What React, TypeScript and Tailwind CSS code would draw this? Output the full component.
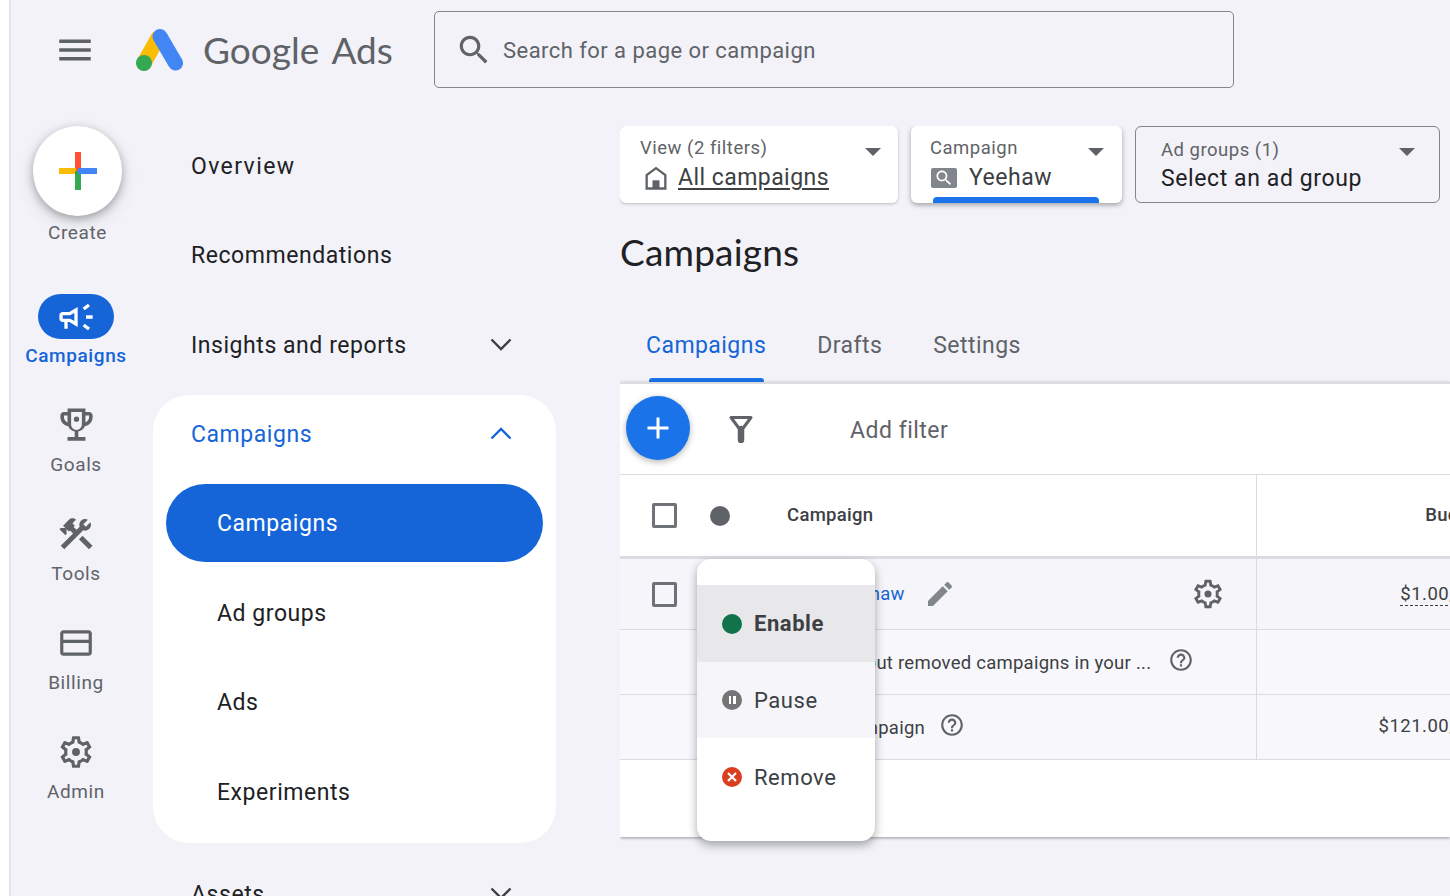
const gear =
	"M19.43 12.98c.04-.32.07-.64.07-.98 0-.34-.03-.66-.07-.98l2.11-1.65c.19-.15.24-.42.12-.64l-2-3.46c-.09-.16-.26-.25-.44-.25-.06 0-.12.01-.17.03l-2.49 1c-.52-.4-1.08-.73-1.69-.98l-.38-2.65C14.46 2.18 14.25 2 14 2h-4c-.25 0-.46.18-.49.42l-.38 2.65c-.61.25-1.17.59-1.69.98l-2.49-1c-.06-.02-.12-.03-.18-.03-.17 0-.34.09-.43.25l-2 3.46c-.13.22-.07.49.12.64l2.11 1.65c-.04.32-.07.65-.07.98 0 .33.03.66.07.98l-2.11 1.65c-.19.15-.24.42-.12.64l2 3.46c.09.16.26.25.44.25.06 0 .12-.01.17-.03l2.49-1c.52.4 1.08.73 1.69.98l.38 2.65c.03.24.24.42.49.42h4c.25 0 .46-.18.49-.42l.38-2.65c.61-.25 1.17-.59 1.69-.98l2.49 1c.06.02.12.03.18.03.17 0 .34-.09.43-.25l2-3.46c.12-.22.07-.49-.12-.64l-2.11-1.65zm-1.98-1.71c.04.31.05.52.05.73 0 .21-.02.43-.05.73l-.14 1.13.89.7 1.08.84-.7 1.21-1.27-.51-1.04-.42-.9.68c-.43.32-.84.56-1.25.73l-1.06.43-.16 1.13-.2 1.35h-1.4l-.19-1.35-.16-1.13-1.06-.43c-.43-.18-.83-.41-1.23-.71l-.91-.7-1.06.43-1.27.51-.7-1.21 1.08-.84.89-.7-.14-1.13c-.03-.31-.05-.54-.05-.74s.02-.43.05-.73l.14-1.13-.89-.7-1.08-.84.7-1.21 1.27.51 1.04.42.9-.68c.43-.32.84-.56 1.25-.73l1.06-.43.16-1.13.2-1.35h1.39l.19 1.35.16 1.13 1.06.43c.43.18.83.41 1.23.71l.91.7 1.06-.43 1.27-.51.7 1.21-1.07.85-.89.7.14 1.13zM12 9.5a2.5 2.5 0 1 0 0 5 2.5 2.5 0 0 0 0-5z";

const help =
	"M11 18h2v-2h-2v2zm1-16C6.480 2 2 6.480 2 12s4.480 10 10 10 10-4.480 10-10S17.520 2 12 2zm0 18c-4.410 0-8-3.590-8-8s3.590-8 8-8 8 3.590 8 8-3.590 8-8 8zm0-14c-2.210 0-4 1.790-4 4h2c0-1.100.9-2 2-2s2 .9 2 2c0 2-3 1.750-3 5h2c0-2.250 3-2.500 3-5 0-2.210-1.790-4-4-4z";

const search =
	"M15.500 14h-.79l-.28-.27C15.410 12.590 16 11.110 16 9.500 16 5.910 13.090 3 9.500 3S3 5.910 3 9.500 5.910 16 9.500 16c1.610 0 3.090-.59 4.230-1.570l.27.28v.79l5 4.990L20.490 19l-4.990-5zm-6 0C7.010 14 5 11.990 5 9.500S7.010 5 9.500 5 14 7.010 14 9.500 11.990 14 9.500 14z";

function Icon({ d, className }: { d: string; className?: string }) {
	return (
		<svg viewBox="0 0 24 24" fill="currentColor" className={className}>
			<path d={d} />
		</svg>
	);
}

function Chevron({ up, className }: { up?: boolean; className?: string }) {
	return (
		<svg viewBox="0 0 22 13" fill="none" stroke="currentColor" strokeWidth="2.4" className={className}>
			<path d={up ? "M1.5 11.5 11 2l9.500 9.500" : "M1.5 1.500 11 11l9.500-9.500"} />
		</svg>
	);
}

function Caret() {
	return <div className="h-0 w-0 border-x-[8px] border-t-[8px] border-x-transparent border-t-[#5f6368]" />;
}

const railItems = [
	{
		label: "Goals",
		size: "w-[43px] h-[43px] -mt-[2px]",
		d: "M19 5h-2V3H7v2H5c-1.100 0-2 .9-2 2v1c0 2.550 1.920 4.630 4.390 4.940.63 1.500 1.980 2.630 3.610 2.960V19H7v2h10v-2h-4v-3.100c1.630-.33 2.980-1.460 3.610-2.960C19.080 12.630 21 10.550 21 8V7c0-1.100-.9-2-2-2zM5 8V7h2v3.820C5.840 10.400 5 9.300 5 8zm10 4c0 1.650-1.350 3-3 3s-3-1.350-3-3V5h6v7zm4-4c0 1.300-.84 2.400-2 2.820V7h2v1zM12 7.500a1.500 1.500 0 1 0 0 3 1.500 1.500 0 0 0 0-3z",
	},
	{
		label: "Tools",
		size: "w-[40px] h-[40px] -mt-[1px]",
		d: "M13.783 15.172l2.121-2.121 5.996 5.996-2.121 2.121zM17.500 10c1.930 0 3.500-1.570 3.500-3.500 0-.58-.16-1.120-.41-1.600l-2.700 2.700-1.490-1.490 2.700-2.700c-.48-.25-1.020-.41-1.600-.41C15.570 3 14 4.570 14 6.500c0 .41.08.8.21 1.160l-1.850 1.850-1.780-1.780.71-.71-1.410-1.410L12 3.490c-1.170-1.170-3.070-1.170-4.240 0L4.220 7.030l1.410 1.410H2.810l-.71.71 3.540 3.540.71-.71V9.150l1.410 1.410.71-.71 1.780 1.780-7.410 7.410 2.120 2.120L16.340 9.790c.36.13.75.21 1.160.21z",
	},
	{
		label: "Billing",
		size: "w-[38px] h-[38px] -mt-[1px]",
		d: "M20 4H4c-1.110 0-1.990.89-1.990 2L2 18c0 1.110.89 2 2 2h16c1.110 0 2-.89 2-2V6c0-1.110-.89-2-2-2zm0 14H4v-6h16v6zm0-8H4V6h16v4z",
	},
	{ label: "Admin", size: "w-[38px] h-[38px] -mt-[1px]", d: gear },
];

function Rail() {
	return (
		<div className="w-[130px] shrink-0">
			<div className="h-[168px] flex flex-col items-center pl-[3px]">
				<div className="w-[89px] h-[90px] rounded-full bg-white shadow-[0_3px_8px_rgba(60,64,67,0.4),0_6px_18px_rgba(60,64,67,0.12)] flex items-center justify-center">
					<svg viewBox="0 0 40 40" className="w-[40px] h-[40px]">
						<rect x="17" y="1" width="6" height="19" fill="#ff5136" />
						<rect x="1" y="17" width="17" height="6" fill="#fbbc04" />
						<rect x="17" y="20" width="6" height="19" fill="#34a853" />
						<rect x="20" y="17" width="19" height="6" fill="#4285f4" />
					</svg>
				</div>
				<span className="mt-[6px] text-[19px] leading-[22px] tracking-[0.6px] text-[#5f6368]">Create</span>
			</div>
			<div className="h-[109px] flex flex-col items-center">
				<div className="w-[76px] h-[45px] rounded-full bg-[#1565d8] flex items-center justify-center text-white">
					<Icon
						className="w-[40px] h-[40px]"
						d="M18 11v2h4v-2h-4zm-2 6.610c.96.71 2.210 1.650 3.200 2.400.4-.53.8-1.070 1.200-1.600-.99-.74-2.240-1.680-3.200-2.400-.4.54-.8 1.080-1.200 1.600zM20.400 5.600c-.4-.53-.8-1.070-1.200-1.600-.99.74-2.240 1.680-3.200 2.400.4.53.8 1.070 1.200 1.600.96-.72 2.210-1.650 3.200-2.400zM4 9c-1.100 0-2 .9-2 2v2c0 1.100.9 2 2 2h1v4h2v-4h1l5 3V6L8 9H4zm5.030 1.710L11 9.530v4.940l-1.970-1.180-.48-.29H4v-2h4.550l.48-.29z"
					/>
				</div>
				<span className="mt-[6px] text-[19px] leading-[22px] font-medium tracking-[0.6px] text-[#1565d8]">Campaigns</span>
			</div>
			{railItems.map((item) => (
				<div key={item.label} className="h-[109px] flex flex-col items-center">
					<div className="h-[45px] flex items-center justify-center text-[#5f6368]">
						<Icon className={item.size} d={item.d} />
					</div>
					<span className="mt-[6px] text-[19px] leading-[22px] tracking-[0.6px] text-[#5f6368]">{item.label}</span>
				</div>
			))}
		</div>
	);
}

function NavRow({ label, open, wide }: { label: string; open?: boolean; wide?: boolean }) {
	return (
		<div className={`h-[78px] flex items-center justify-between pl-[38px] pr-[44px] text-[23px] text-[#202124] ${wide ? "tracking-[1.4px]" : "tracking-[0.55px]"}`}>
			<span className="pt-[4px]">{label}</span>
			{open && <Chevron className="w-[22px] h-[13px] text-[#3c4043]" />}
		</div>
	);
}

function Nav() {
	return (
		<div className="w-[403px] ml-[12px] shrink-0 flex flex-col gap-[11.500px]">
			<NavRow label="Overview" wide />
			<NavRow label="Recommendations" />
			<NavRow label="Insights and reports" open />
			<div className="bg-white rounded-[36px] pb-[12px] px-[13px] flex flex-col gap-[11.500px]">
				<div className="h-[78px] -mx-[13px] flex items-center justify-between pl-[38px] pr-[44px] text-[23px] tracking-[0.55px] text-[#1565d8]">
					<span className="pt-[4px]">Campaigns</span>
					<Chevron up className="w-[22px] h-[13px]" />
				</div>
				<div className="h-[78px] rounded-full bg-[#1565d8] text-white flex items-center pt-[3px] pl-[51px] text-[23px] tracking-[0.55px]">
					Campaigns
				</div>
				{["Ad groups", "Ads", "Experiments"].map((label) => (
					<div key={label} className="h-[78px] flex items-center pt-[3px] pl-[51px] text-[23px] tracking-[0.55px] text-[#202124]">
						{label}
					</div>
				))}
			</div>
			<NavRow label="Assets" open />
		</div>
	);
}

function Selectors() {
	return (
		<div className="flex h-[77px] gap-[13px]">
			<div className="w-[278px] bg-white rounded-[6px] shadow-[0_1px_3px_rgba(60,64,67,0.3)] pl-[20px] pr-[17px] flex items-center justify-between">
				<div>
					<div className="text-[18.500px] leading-[24px] tracking-[0.5px] text-[#5f6368] -mt-[1px]">View (2 filters)</div>
					<div className="flex items-center gap-[10px] mt-[4px]">
						<svg viewBox="0 0 24 24" className="w-[28px] h-[28px] ml-[2px] -mr-[2px] text-[#5f6368]" fill="none" stroke="currentColor" strokeWidth="2">
							<path d="M4 21V9.500L12 3.500l8 6V21z" />
							<rect x="9" y="14" width="6" height="7" fill="currentColor" stroke="none" />
						</svg>
						<span className="text-[23px] leading-[28px] tracking-[0.45px] underline underline-offset-[3px] text-[#3c4043]">All campaigns</span>
					</div>
				</div>
				<div className="-mt-[26px]"><Caret /></div>
			</div>
			<div className="relative w-[211px] bg-white rounded-[6px] shadow-[0_2px_5px_rgba(60,64,67,0.45)] pl-[19px] pr-[18px] flex items-center justify-between">
				<div>
					<div className="text-[18.500px] leading-[24px] tracking-[0.5px] text-[#5f6368] -mt-[1px]">Campaign</div>
					<div className="flex items-center gap-[12px] mt-[4px]">
						<div className="w-[28px] h-[22px] -mr-[1px] flex items-center justify-center">
							<div className="w-[26px] h-[20px] bg-[#80868b] rounded-[2px] flex items-center justify-center text-white">
								<Icon className="w-[20px] h-[20px]" d={search} />
							</div>
						</div>
						<span className="text-[23px] leading-[28px] tracking-[0.5px] text-[#3c4043]">Yeehaw</span>
					</div>
				</div>
				<div className="-mt-[26px]"><Caret /></div>
				<div className="absolute left-[22px] bottom-0 w-[166px] h-[6px] rounded-t-[4px] bg-[#1a73e8]" />
			</div>
			<div className="w-[305px] rounded-[6px] border border-[#80868b] pl-[25px] pr-[24px] flex items-center justify-between">
				<div>
					<div className="text-[18.500px] leading-[24px] tracking-[0.5px] text-[#5f6368] mt-[1px]">Ad groups (1)</div>
					<div className="mt-[3px] text-[23px] leading-[28px] tracking-[0.6px] text-[#202124]">Select an ad group</div>
				</div>
				<div className="-mt-[26px]"><Caret /></div>
			</div>
		</div>
	);
}

function Checkbox() {
	return <div className="w-[25px] h-[25px] rounded-[2px] border-[3px] border-[#5f6368]/90 shrink-0" />;
}

function StatusMenu() {
	return (
		<div className="absolute left-[77px] top-[175px] w-[178px] h-[282px] py-[26px] rounded-[14px] bg-white shadow-[0_4px_10px_rgba(60,64,67,0.45)] text-[22px] tracking-[0.55px] text-[#3c4043]">
			<div className="h-[77px] bg-[#e8e8ea] flex items-center pl-[25px] gap-[12px] font-bold">
				<span className="w-[20px] h-[20px] rounded-full bg-[#10734a]" />
				Enable
			</div>
			<div className="h-[76px] bg-[#f6f5fa] flex items-center pl-[25px] gap-[12px]">
				<span className="w-[20px] h-[20px] rounded-full bg-[#757575] flex items-center justify-center gap-[2px]">
					<span className="w-[2.500px] h-[8px] bg-white" />
					<span className="w-[2.500px] h-[8px] bg-white" />
				</span>
				Pause
			</div>
			<div className="h-[77px] flex items-center pl-[25px] gap-[12px]">
				<span className="w-[20px] h-[20px] rounded-full bg-[#d93f1e] flex items-center justify-center">
					<svg viewBox="0 0 10 10" className="w-[10px] h-[10px]" stroke="white" strokeWidth="2.200">
						<path d="M1 1l8 8M9 1l-8 8" />
					</svg>
				</span>
				<span className="pt-[1px]">Remove</span>
			</div>
		</div>
	);
}

function Table() {
	return (
		<div className="relative bg-white h-[455px] border-t-2 border-[#dadce0] shadow-[0_1px_3px_rgba(60,64,67,0.5)]">
			<div className="h-[91px] flex items-center border-b border-[#dadce0] pl-[6px]">
				<div className="w-[64px] h-[64px] rounded-full bg-[#1a73e8] shadow-[0_2px_6px_rgba(60,64,67,0.4)] flex items-center justify-center text-white -mt-[2px]">
					<Icon className="w-[36px] h-[36px]" d="M19 13h-6v6h-2v-6H5v-2h6V5h2v6h6z" />
				</div>
				<svg viewBox="0 0 26 28" className="w-[26px] h-[28px] ml-[38px] text-[#5f6368]" fill="none" stroke="currentColor" strokeWidth="3">
					<path d="M3 2.500h20L13 16z" strokeLinejoin="round" />
					<path d="M13 14v11" strokeWidth="6.500" strokeLinecap="round" />
				</svg>
				<span className="ml-[96px] pt-[4px] text-[23px] tracking-[0.5px] text-[#5f6368]">Add filter</span>
			</div>
			<div className="h-[84px] flex border-b-[3px] border-[#dadce0]">
				<div className="w-[637px] shrink-0 border-r border-[#dadce0] flex items-center pl-[32px] text-[18.500px] tracking-[0.3px] font-medium text-[#3c4043]">
					<Checkbox />
					<span className="ml-[33px] w-[20px] h-[20px] rounded-full bg-[#5f6368]" />
					<span className="ml-[57px]">Campaign</span>
				</div>
				<div className="w-[229px] shrink-0 flex items-center justify-end text-[18.500px] tracking-[0.3px] font-medium text-[#3c4043]">Budget</div>
			</div>
			<div className="h-[71px] flex border-b border-[#dadce0] bg-[#f6f5f9]">
				<div className="w-[637px] shrink-0 border-r border-[#dadce0] flex items-center pl-[32px] pr-[31px]">
					<Checkbox />
					<span className="ml-[162px] pt-[2px] text-[18.500px] tracking-[0.2px] text-[#1565d8]">Yeehaw</span>
					<Icon className="ml-[19px] w-[32px] h-[32px] text-[#80868b]" d="M3 17.250V21h3.750L17.810 9.940l-3.750-3.750L3 17.250zM20.710 7.040c.39-.39.39-1.020 0-1.410l-2.340-2.340c-.39-.39-1.020-.39-1.410 0l-1.830 1.830 3.750 3.750 1.830-1.830z" />
					<Icon className="ml-auto w-[34px] h-[34px] text-[#5f6368]" d={gear} />
				</div>
				<div className="w-[231px] shrink-0 flex items-center justify-end text-[18.500px] tracking-[0.5px] text-[#3c4043]">
					<span className="border-b border-dashed border-[#3c4043] leading-[22px]">$1.00/day</span>
				</div>
			</div>
			<div className="h-[65px] flex border-b border-[#dadce0] bg-[#f8f8fc]">
				<div className="w-[637px] shrink-0 border-r border-[#dadce0] flex items-center pl-[167px] text-[18.500px] tracking-[0.25px] text-[#3c4043]">
					<span className="pt-[3px]">Total: All but removed campaigns in your ...</span>
					<Icon className="ml-[17px] -mt-[4px] w-[26px] h-[26px] text-[#5f6368]" d={help} />
				</div>
				<div className="w-[231px] shrink-0" />
			</div>
			<div className="h-[65px] flex border-b border-[#dadce0] bg-[#f8f8fc]">
				<div className="w-[637px] shrink-0 border-r border-[#dadce0] flex items-center pl-[167px] text-[18.500px] tracking-[0.25px] text-[#3c4043]">
					<span className="pt-[3px]">Total: Campaign</span>
					<Icon className="ml-[14px] -mt-[4px] w-[26px] h-[26px] text-[#5f6368]" d={help} />
				</div>
				<div className="w-[231px] shrink-0 flex items-center justify-end text-[18.500px] tracking-[0.5px] text-[#3c4043]">$121.00/day</div>
			</div>
			<StatusMenu />
		</div>
	);
}

export default function App() {
	return (
		<div className="flex h-screen w-full overflow-hidden bg-[#f2f2f8] font-[Roboto,sans-serif]">
			<div className="w-[11px] shrink-0 bg-white border-r-2 border-[#e4e4ea]" />
			<div className="flex-1 min-w-0">
				<header className="h-[99px] flex items-center">
					<Icon className="ml-[43px] w-[42px] h-[42px] text-[#5f6368]" d="M3 18h18v-2H3v2zm0-5h18v-2H3v2zm0-7v2h18V6H3z" />
					<svg viewBox="0 0 48 44" className="ml-[40px] w-[48px] h-[44px]" fill="none" strokeLinecap="round">
						<path d="M8 35 22 10" stroke="#fbbc04" strokeWidth="15" />
						<path d="M24 8.500 39.500 35" stroke="#4285f4" strokeWidth="15" />
						<circle cx="8" cy="35" r="8" fill="#34a853" />
					</svg>
					<span className="ml-[19px] w-[231px] font-[Lato,sans-serif] text-[37px] [word-spacing:4px] text-[#5f6368]">Google Ads</span>
					<div className="w-[800px] h-[77px] rounded-[5px] border border-[#80868b] flex items-center pl-[20px] gap-[10px]">
						<Icon className="w-[38px] h-[38px] text-[#5f6368]" d={search} />
						<span className="pt-[2px] text-[22px] tracking-[0.45px] text-[#5f6368]">Search for a page or campaign</span>
					</div>
				</header>
				<div className="flex pt-[27px]">
					<Rail />
					<Nav />
					<main className="ml-[64px] w-[830px] shrink-0 overflow-hidden pb-[6px]">
						<Selectors />
						<h1 className="mt-[25px] h-[82px] font-[Lato,sans-serif] text-[37px] tracking-[0.2px] leading-[48px] text-[#202124]">Campaigns</h1>
						<div className="flex h-[72px] pl-[26px] gap-[51px] text-[23px] tracking-[0.45px] text-[#5f6368]">
							<div className="relative flex items-center text-[#1565d8]">
								Campaigns
								<div className="absolute left-[3px] right-[2px] bottom-0 h-[4px] rounded-t-[3px] bg-[#1a73e8]" />
							</div>
							<div className="flex items-center">Drafts</div>
							<div className="flex items-center">Settings</div>
						</div>
						<Table />
					</main>
				</div>
			</div>
		</div>
	);
}
